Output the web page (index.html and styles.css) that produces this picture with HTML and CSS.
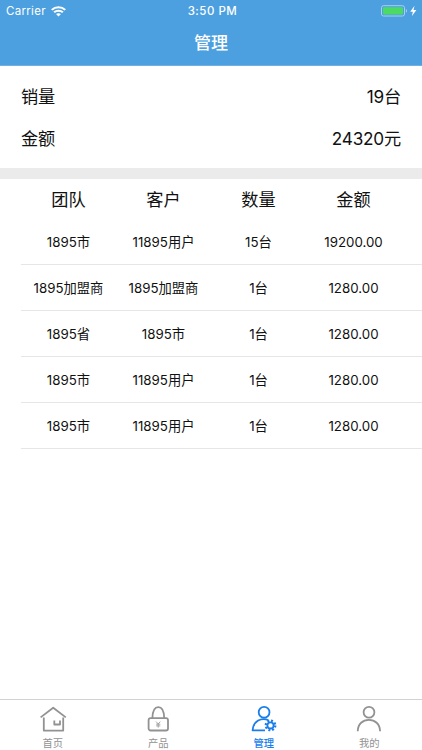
FILE: index.html
```
<!DOCTYPE html>
<html lang="zh-CN">
<head>
    <meta charset="UTF-8">
    <meta name="viewport" content="width=device-width, initial-scale=1.0">
    <title>管理</title>
    <link rel="stylesheet" href="styles.css">
</head>
<body>
    <div class="app">
        <header class="header">
            <div class="status-bar">
                <div class="carrier">
                    <span>Carrier</span>
                    <svg width="15" height="11" viewBox="0 0 14 11" preserveAspectRatio="none" fill="none" stroke="#fff" stroke-width="2">
                        <path d="M0.7 3.9C4.3 0.4 9.7 0.4 13.3 3.9"/>
                        <path d="M2.9 6.3C5.2 4.1 8.8 4.1 11.1 6.3"/>
                        <path d="M4.7 8.1C6 6.9 8 6.9 9.3 8.1L7 10.5Z" fill="#fff" stroke="none"/>
                    </svg>
                </div>
                <div class="time">3:50 PM</div>
                <div class="battery">
                    <svg width="37" height="12" viewBox="0 0 37 12">
                        <rect x="0.5" y="0.7" width="23" height="10.3" rx="2" fill="none" stroke="#a6cff0"/>
                        <rect x="2" y="2.2" width="20" height="7.4" rx="1" fill="#4cd964"/>
                        <path d="M24.9 4C26.4 4.6 26.4 7.1 24.9 7.7Z" fill="#a6cff0"/>
                        <path d="M33.5 0.8L29.2 6.8H31.9L30.8 11.2L35.4 5H32.5Z" fill="#fff"/>
                    </svg>
                </div>
            </div>
            <h1 class="title">管理</h1>
        </header>

        <section class="summary">
            <div class="summary-row"><span>销量</span><span>19台</span></div>
            <div class="summary-row"><span>金额</span><span>24320元</span></div>
        </section>

        <main class="list">
            <div class="row row-head"><span>团队</span><span>客户</span><span>数量</span><span>金额</span></div>
            <div class="row"><span>1895市</span><span>11895用户</span><span>15台</span><span>19200.00</span></div>
            <div class="row"><span>1895加盟商</span><span>1895加盟商</span><span>1台</span><span>1280.00</span></div>
            <div class="row"><span>1895省</span><span>1895市</span><span>1台</span><span>1280.00</span></div>
            <div class="row"><span>1895市</span><span>11895用户</span><span>1台</span><span>1280.00</span></div>
            <div class="row"><span>1895市</span><span>11895用户</span><span>1台</span><span>1280.00</span></div>
        </main>

        <nav class="tab-bar">
            <a class="tab">
                <svg class="tab-icon" viewBox="0 0 28 28">
                    <path d="M1.6 12.4L14.2 2.7L26.8 12.4"/>
                    <path d="M4.8 12.5V25.6H24.2V12.5"/>
                    <path d="M15.3 15.6V19.5H21V15.6"/>
                </svg>
                <span>首页</span>
            </a>
            <a class="tab">
                <svg class="tab-icon" viewBox="0 0 28 28">
                    <rect x="4.6" y="13.2" width="19.4" height="12.3" rx="2"/>
                    <path d="M8.4 13C8.6 6.5 10.4 2.2 14.3 2.2S20 6.5 20.2 13"/>
                    <path class="thin" d="M12.1 16.6L14.2 19L16.3 16.6M14.2 19V22.6M12.1 19.2H16.3M12.1 20.9H16.3"/>
                </svg>
                <span>产品</span>
            </a>
            <a class="tab active">
                <svg class="tab-icon" viewBox="0 0 28 28">
                    <circle cx="14.1" cy="7.3" r="5.4"/>
                    <path d="M18.5 15.2C11.5 12 3.2 16 2.6 25.4H15"/>
                    <circle cx="20.5" cy="20.4" r="3.1"/>
                    <circle cx="20.5" cy="20.4" r="4.7" stroke-width="2.4" stroke-dasharray="1.9 1.79"/>
                </svg>
                <span>管理</span>
            </a>
            <a class="tab">
                <svg class="tab-icon" viewBox="0 0 28 28">
                    <circle cx="14" cy="7.3" r="5.4"/>
                    <path d="M2.7 26.2C3 18.8 7.8 14.9 13.9 14.9S24.8 18.8 25.1 26.2"/>
                </svg>
                <span>我的</span>
            </a>
        </nav>
    </div>
</body>
</html>
```
FILE: styles.css
```
* {
    box-sizing: border-box;
}

body, html {
    margin: 0;
    padding: 0;
    height: 100%;
    overflow: hidden;
    font-family: Inter, 'Noto Sans CJK SC', sans-serif;
    background-color: #fff;
    color: #111;
}

.app {
    display: flex;
    flex-direction: column;
    height: 100%;
}

/* Header */
.header {
    height: 66px;
    background-color: #4ca0e0;
    border-bottom: 1px solid #70b1e5;
    color: #fff;
}

.status-bar {
    display: grid;
    grid-template-columns: 1fr auto 1fr;
    align-items: center;
    height: 22px;
    padding: 0 4px 0 6px;
    font-size: 11.5px;
}

.carrier {
    display: flex;
    align-items: center;
    gap: 5px;
    letter-spacing: 0.3px;
}

.carrier svg,
.battery svg {
    display: block;
}

.time {
    padding-left: 1px;
    font-weight: 500;
    letter-spacing: 0.5px;
}

.battery {
    justify-self: end;
}

.title {
    margin: 0;
    font-size: 17px;
    font-weight: 500;
    line-height: 43px;
    text-align: center;
}

/* Totals */
.summary {
    height: 113px;
    padding: 10px 21px 0;
    border-bottom: 11px solid #ebebeb;
}

.summary-row {
    display: flex;
    justify-content: space-between;
    height: 42px;
    line-height: 42px;
    font-size: 17.2px;
    letter-spacing: -0.2px;
}

/* Table */
.list {
    flex: 1;
    padding-left: 21px;
}

.row {
    display: grid;
    grid-template-columns: repeat(4, 1fr);
    align-items: center;
    height: 46px;
    padding-right: 21px;
    border-bottom: 1px solid #e6e6e6;
    font-size: 13.3px;
    text-align: center;
}

.row-head {
    height: 40px;
    padding-bottom: 2px;
    border-bottom: 0;
    font-size: 17.2px;
}

/* Bottom tabs */
.tab-bar {
    display: flex;
    height: 51px;
    border-top: 1px solid #d2d2d2;
}

.tab {
    flex: 1;
    display: flex;
    flex-direction: column;
    align-items: center;
    padding-top: 5px;
    color: #929292;
    font-size: 10.3px;
    line-height: 20px;
}

.tab.active {
    color: #1a7eea;
    font-weight: 500;
}

.tab-icon {
    flex-shrink: 0;
    width: 28px;
    height: 28px;
    fill: none;
    stroke: currentColor;
    stroke-width: 1.8;
    stroke-linejoin: round;
}

.thin {
    stroke-width: 0.8;
}
```
